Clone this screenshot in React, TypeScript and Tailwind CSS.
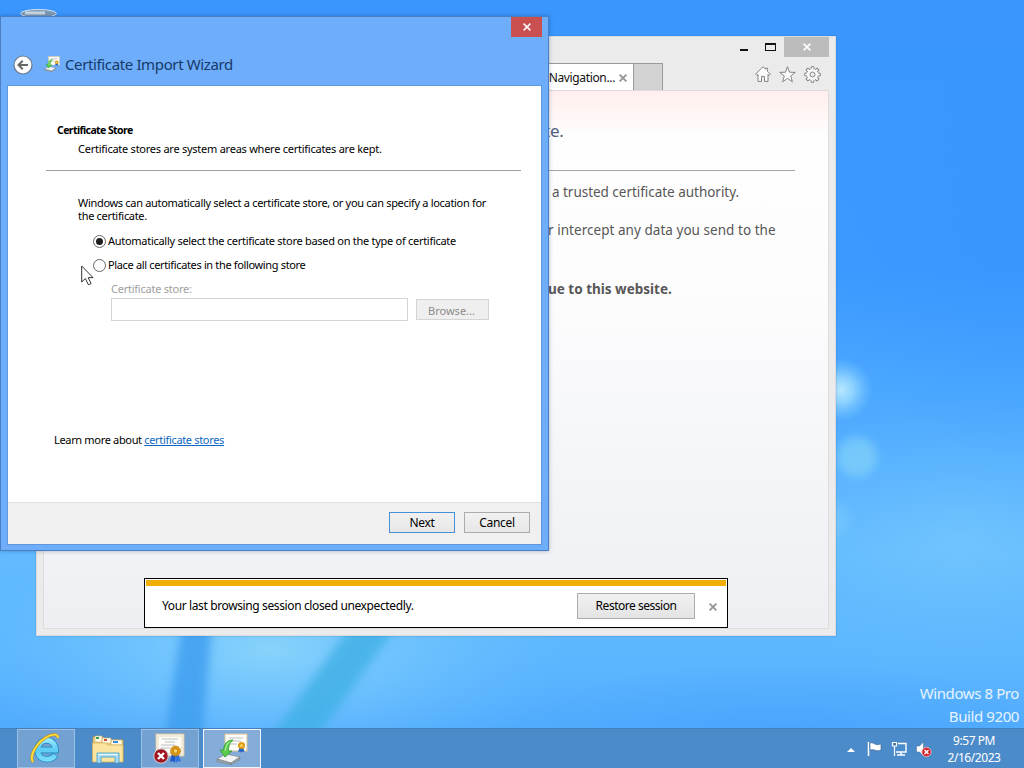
import React from "react";

function Wallpaper() {
  return (
    <svg className="absolute inset-0" width="1024" height="768" viewBox="0 0 1024 768">
      <defs>
        <linearGradient id="sky" x1="0" y1="0" x2="0" y2="1">
          <stop offset="0" stopColor="#3a96fd" />
          <stop offset="0.35" stopColor="#3b99ff" />
          <stop offset="0.55" stopColor="#50abff" />
          <stop offset="0.72" stopColor="#62bbff" />
          <stop offset="0.85" stopColor="#5db7ff" />
          <stop offset="1" stopColor="#4ca6fd" />
        </linearGradient>
        <radialGradient id="glow">
          <stop offset="0" stopColor="#8ad4fb" stopOpacity="0.95" />
          <stop offset="1" stopColor="#6cc2ff" stopOpacity="0" />
        </radialGradient>
        <radialGradient id="shade">
          <stop offset="0" stopColor="#338ffc" stopOpacity="0.7" />
          <stop offset="1" stopColor="#338ffc" stopOpacity="0" />
        </radialGradient>
        <radialGradient id="spark">
          <stop offset="0" stopColor="#bfeaff" stopOpacity="0.95" />
          <stop offset="0.4" stopColor="#a2dfff" stopOpacity="0.75" />
          <stop offset="1" stopColor="#7bcbff" stopOpacity="0" />
        </radialGradient>
        <filter id="slight" x="-50%" y="-50%" width="200%" height="200%">
          <feGaussianBlur stdDeviation="5" />
        </filter>
      </defs>
      <rect width="1024" height="768" fill="url(#sky)" />
      <ellipse cx="270" cy="650" rx="300" ry="130" fill="url(#glow)" />
      <ellipse cx="960" cy="540" rx="240" ry="140" fill="url(#glow)" opacity="0.4" />
      <ellipse cx="1024" cy="260" rx="200" ry="200" fill="url(#shade)" opacity="0.4" />
      <ellipse cx="780" cy="750" rx="280" ry="90" fill="url(#shade)" opacity="0.45" />
      <path d="M184 610 L213 610 L200 768 L160 768Z" fill="#3f9ff0" opacity="0.85" filter="url(#slight)" />
      <path d="M362 610 L408 610 L308 750 L262 750Z" fill="#3fb0e6" opacity="0.8" filter="url(#slight)" />
      <circle cx="841" cy="390" r="32" fill="url(#spark)" />
      <circle cx="857" cy="457" r="20" fill="#8ad8f8" opacity="0.6" filter="url(#slight)" />
      <circle cx="831" cy="520" r="18" fill="#83d2ff" opacity="0.4" filter="url(#slight)" />
      <ellipse cx="38.500" cy="13.500" rx="18" ry="4" fill="#7d9ab4" stroke="#cfe2f3" strokeWidth="1" />
      <path d="M25 13h20" stroke="#c9d7e4" strokeWidth="3" />
    </svg>
  );
}

function CloseGlyph({ size, color, width }: { size: number; color: string; width: number }) {
  return (
    <svg width={size} height={size} viewBox="0 0 8 8" fill="none" stroke={color} strokeWidth={width}>
      <path d="M0.600 0.600L7.400 7.400M7.400 0.600L0.600 7.400" />
    </svg>
  );
}

function HomeIcon() {
  return (
    <svg width="16" height="16" viewBox="0 0 16 16" fill="#fbfbfb" stroke="#858585" strokeWidth="1" strokeLinejoin="round">
      <path d="M8 0.700L0.600 8.200l1.200 1.200L3 8.300V15.400h3.500v-5h3v5H13V8.300l1.200 1.100 1.200-1.200-3-3V2.200h-2v1z" />
    </svg>
  );
}

function StarIcon() {
  return (
    <svg width="17" height="17" viewBox="0 0 17 17" fill="#fbfbfb" stroke="#858585" strokeWidth="1" strokeLinejoin="round">
      <path d="M8.500 0.700l2 5.500 5.800.200-4.600 3.600 1.700 5.800-4.900-3.400-4.900 3.400 1.700-5.800L.7 6.400l5.800-.200z" />
    </svg>
  );
}

function GearIcon() {
  const teeth = [0, 45, 90, 135, 180, 225, 270, 315];
  return (
    <svg width="17" height="17" viewBox="0 0 17 17" strokeLinejoin="round">
      {teeth.map((a) => (
        <path key={a} d="M6.900 3.300L7.200 0.700h2.600l.3 2.600" fill="#fbfbfb" stroke="#858585" transform={`rotate(${a} 8.500 8.500)`} />
      ))}
      <circle cx="8.500" cy="8.500" r="5.300" fill="#fbfbfb" />
      <circle cx="8.500" cy="8.500" r="2.500" fill="#ececec" stroke="#858585" />
    </svg>
  );
}

function BrowserWindow() {
  return (
    <section className="absolute left-[36px] top-[36px] flex h-[600px] w-[800px] flex-col border border-[#d9dbe0] bg-[#ebebeb] shadow-[0_0_2px_rgba(40,90,150,0.35)]">
      <div className="flex h-[26px] shrink-0 items-start justify-end pr-[6px]">
        <div className="mr-[17px] mt-[12px] h-[2px] w-[8px] bg-[#111]" />
        <div className="mr-[8px] mt-[6px] h-[8px] w-[11px] border border-t-2 border-[#111]" />
        <div className="flex h-[20px] w-[45px] items-center justify-center bg-[#bcbcbc]">
          <CloseGlyph size={8} color="#fff" width={1.5} />
        </div>
      </div>
      <div className="flex h-[27px] shrink-0">
        <div className="flex w-[597px] items-center justify-end border-r border-t border-[#9a9a9a] bg-white pr-[6px] pt-[1px]">
          <span className="mr-[4px] whitespace-nowrap font-['Noto_Sans'] text-[12px] leading-none tracking-[-0.350px] text-[#111]">Navigation...</span>
          <CloseGlyph size={8} color="#949494" width={1.8} />
        </div>
        <div className="w-[29px] border-r border-t border-[#9a9a9a] bg-[#d2d2d2]" />
        <div className="ml-[92px] flex items-start gap-[8px] pt-[3px]">
          <HomeIcon />
          <StarIcon />
          <GearIcon />
        </div>
      </div>
      <div className="mx-[6px] mb-[6px] flex flex-1 flex-col items-start overflow-hidden border border-[#dcdcdc] bg-[linear-gradient(to_bottom,#ffefee_0px,#fff5f4_20px,#fefefe_45px,#fdfdfe_190px,#f5f6f8_360px,#eeeff3_539px)] pl-[500px] font-['Noto_Sans'] text-[#575757]">
        <div className="flex h-[80px] w-[251px] items-end border-b border-[#a5a5a5] pb-[27px]">
          <span className="text-[17px] leading-[24px] tracking-[-0.200px] text-[#51617f]">te.</span>
        </div>
        <div className="mt-[11px] whitespace-nowrap pl-[8px] text-[13.500px] leading-[20px] tracking-[-0.030px]">a trusted certificate authority.</div>
        <div className="mt-[18px] whitespace-nowrap pl-[4px] text-[13.500px] leading-[20px] tracking-[0.040px]">r intercept any data you send to the</div>
        <div className="mt-[39px] whitespace-nowrap pl-[4px] text-[13.500px] font-bold leading-[20px]">ue to this website.</div>
        <div className="-ml-[400px] mt-[279px] flex h-[50px] w-[584px] shrink-0 flex-col border border-black bg-white p-[1px]">
          <div className="h-[6px] shrink-0 bg-[#f0ae06]" />
          <div className="flex h-[40px] items-center pl-[16px] pr-[9px] text-[12px] text-black">
            <span className="whitespace-nowrap tracking-[-0.380px]">Your last browsing session closed unexpectedly.</span>
            <button className="ml-auto mr-[14px] h-[26px] w-[118px] border border-[#acacac] bg-linear-to-b from-[#f1f1f1] to-[#e4e4e4] pb-px tracking-[-0.480px]">Restore session</button>
            <div className="pt-[2px]"><CloseGlyph size={8} color="#949494" width={1.800} /></div>
          </div>
        </div>
      </div>
    </section>
  );
}

function Certificate({ size }: { size: number }) {
  return (
    <svg width={size} height={size} viewBox="0 0 32 32">
      <rect x="2" y="1" width="28" height="22" fill="#fdfcf6" stroke="#cfc3a4" />
      <rect x="4" y="3" width="24" height="18" fill="none" stroke="#e8d9b8" />
      <path d="M8 6h16M11 9h10M7 12h14M7 15h9" stroke="#a9b1bc" strokeWidth="0.800" />
      <path d="M18 20l-2 9 3-1 2 2 1-9z" fill="#1d59c9" />
      <path d="M24 20l3 9-3-1-2 2-1-9z" fill="#2f74e0" />
      <circle cx="21.500" cy="18" r="5" fill="#dc9a16" stroke="#b97608" strokeDasharray="1.500 1" />
      <circle cx="21.500" cy="18" r="2.300" fill="#ffd362" stroke="#9c6308" strokeWidth="0.600" />
    </svg>
  );
}

function CertificateError() {
  return (
    <div className="relative h-[32px] w-[32px]">
      <Certificate size={32} />
      <svg className="absolute -left-[1px] top-[15px]" width="16" height="16" viewBox="0 0 16 16">
        <circle cx="8" cy="8" r="7.200" fill="#9f1620" stroke="#d9d0d4" />
        <path d="M5 5l6 6M11 5l-6 6" stroke="#fff" strokeWidth="2.400" />
      </svg>
    </div>
  );
}

function CertificateImport({ size }: { size: number }) {
  return (
    <svg width={size} height={size} viewBox="0 0 32 32">
      <rect x="9" y="1" width="22" height="17" fill="#fdfcf6" stroke="#d6c49a" />
      <path d="M13 5h14M15 8h10M12 11h9" stroke="#a9b1bc" strokeWidth="0.800" />
      <path d="M24 13l-2 6 2-.500 1 1 1.500-1 2 .500-1.500-6z" fill="#2563c8" />
      <circle cx="25.500" cy="12.500" r="3.500" fill="#dc9a16" />
      <circle cx="25.500" cy="12.500" r="1.500" fill="#ffd362" />
      <path d="M1 26l9-5 14 3-9 6z" fill="#f0f2f3" stroke="#7e878c" strokeWidth="0.700" />
      <path d="M1 26v2.500l14 3.300V30zM15 30v1.800l9-5.300V24z" fill="#9da6ab" stroke="#6f787d" strokeWidth="0.500" />
      <path d="M17 7c-6 0-9 4-9.500 10H4l5 7 7-6h-3.500c0-5 1-8 4.500-11z" fill="#5acb4c" stroke="#2f9a2e" strokeWidth="0.800" />
      <path d="M13.500 9c-3 2-4 5-4.300 9" stroke="#a5eb91" strokeWidth="1.300" fill="none" />
    </svg>
  );
}

function BackIcon() {
  return (
    <svg width="20" height="20" viewBox="0 0 20 20">
      <circle cx="10" cy="10" r="9" fill="#fefefe" stroke="#6c7b91" strokeWidth="1.200" />
      <path d="M15 10H6M9.700 5.800L5.500 10l4.200 4.200" fill="none" stroke="#686868" strokeWidth="2" />
    </svg>
  );
}

function Radio({ checked, label, tracking }: { checked: boolean; label: string; tracking: string }) {
  return (
    <label className="flex h-[14px] items-center whitespace-nowrap">
      <span className="mr-[2px] flex h-[13px] w-[13px] items-center justify-center rounded-full border border-[#686868] bg-white">
        {checked && <span className="h-[7px] w-[7px] rounded-full bg-[#1e1e1e]" />}
      </span>
      <span className={tracking}>{label}</span>
    </label>
  );
}

function WizardDialog() {
  return (
    <section className="absolute left-0 top-[16px] flex h-[535px] w-[549px] flex-col border border-[#4a7fc4] bg-[#6dadf9] font-['Noto_Sans'] text-[11px] text-black shadow-[0_0_4px_rgba(20,50,100,0.350)]">
      <div className="flex h-[20px] shrink-0 justify-end pr-[6px]">
        <div className="flex h-[20px] w-[31px] items-center justify-center bg-[#c94f50]">
          <CloseGlyph size={8} color="#fff" width={1.500} />
        </div>
      </div>
      <div className="flex h-[48px] shrink-0 items-center pl-[12px] pt-[7px]">
        <BackIcon />
        <div className="ml-[11px] mr-[5px] pb-[1px]">
          <CertificateImport size={16} />
        </div>
        <h1 className="whitespace-nowrap pb-[2px] text-[15px] leading-[20px] tracking-[-0.370px] text-[#173a69]">Certificate Import Wizard</h1>
      </div>
      <div className="ml-[6px] flex h-[460px] w-[535px] flex-col border border-[#5f97dc] bg-white">
        <div className="flex h-[416px] flex-col pl-[38px] pr-[20px] pt-[36px]">
          <div className="pl-[11px] text-[10.500px] font-bold leading-[16px] tracking-[-0.580px]">Certificate Store</div>
          <div className="mt-[3px] whitespace-nowrap pl-[32px] leading-[15px] tracking-[-0.250px]">Certificate stores are system areas where certificates are kept.</div>
          <div className="mt-[14px] h-px shrink-0 bg-[#a0a0a0]" />
          <div className="mt-[25px] whitespace-nowrap pl-[32px] leading-[13px] tracking-[-0.310px]">
            Windows can automatically select a certificate store, or you can specify a location for
            <br />
            the certificate.
          </div>
          <div className="mt-[12px] flex flex-col gap-[10px] pl-[47px]">
            <Radio checked label="Automatically select the certificate store based on the type of certificate" tracking="tracking-[-0.280px]" />
            <Radio checked={false} label="Place all certificates in the following store" tracking="tracking-[-0.350px]" />
          </div>
          <div className="mt-[10px] pl-[65px] leading-[14px] tracking-[-0.240px] text-[#a0a0a0]">Certificate store:</div>
          <div className="mt-[2px] flex items-center pl-[65px]">
            <div className="h-[23px] w-[297px] border border-[#d4d4d4] bg-white" />
            <button className="ml-[8px] h-[21px] w-[73px] border border-[#d4d4d4] bg-[#efefef] pr-[2px] pt-[1px] leading-none text-[#8b8b8b]">Browse...</button>
          </div>
          <div className="mt-[112px] whitespace-nowrap pl-[8px] leading-[14px] tracking-[-0.330px]">
            Learn more about <a className="text-[#0a66c2] underline">certificate stores</a>
          </div>
        </div>
        <div className="flex flex-1 items-start justify-end gap-[9px] border-t border-[#dfdfdf] bg-[#f0f0f0] pr-[11px] pt-[9px] text-[12px]">
          <button className="h-[21px] w-[66px] border border-[#4790d8] bg-linear-to-b from-[#f1f1f1] to-[#e7e7e7] leading-none tracking-[-0.300px]">Next</button>
          <button className="h-[21px] w-[66px] border border-[#acacac] bg-linear-to-b from-[#f1f1f1] to-[#e7e7e7] leading-none tracking-[-0.300px]">Cancel</button>
        </div>
      </div>
    </section>
  );
}

function ExplorerLogo() {
  return (
    <svg width="32" height="32" viewBox="0 0 32 32" fill="none">
      <defs>
        <linearGradient id="ie" gradientUnits="userSpaceOnUse" x1="0" y1="4" x2="0" y2="30">
          <stop offset="0" stopColor="#a5eeff" />
          <stop offset="0.5" stopColor="#5ccbf4" />
          <stop offset="1" stopColor="#7fe0fc" />
        </linearGradient>
      </defs>
      <path d="M8 17H25.500C25.500 11 21.500 7.300 16.500 7.300 11.500 7.300 7.700 11.500 7.700 17s3.800 9.200 9 9.200c4 0 7-1.500 8.600-4.700" stroke="#1683bd" strokeWidth="6.400" />
      <path d="M8 17H25.500C25.500 11 21.500 7.300 16.500 7.300 11.500 7.300 7.700 11.500 7.700 17s3.800 9.200 9 9.200c4 0 7-1.500 8.400-4.400" stroke="url(#ie)" strokeWidth="5" />
      <path d="M3 29C-1 23 6 11 15 5 21 1 28 0 28 5" stroke="#b8860b" strokeWidth="2.800" />
      <path d="M3 29C-1 23 6 11 15 5 21 1 28 0 28 5" stroke="#ffdc3c" strokeWidth="2" />
    </svg>
  );
}

function FolderIcon() {
  return (
    <svg width="34" height="32" viewBox="0 0 34 32">
      <path d="M2 4h10l2 3h18v21H2z" fill="#f2d67f" stroke="#c39c43" strokeWidth="0.700" />
      <path d="M4 3h7v6H4zM11 5h9v5h-9zM20 7h11v5H20z" fill="#fffbe8" stroke="#cdb067" strokeWidth="0.600" />
      <path d="M5 4h3v2H5z" fill="#2fa04c" />
      <path d="M13 6h3v2h-3z" fill="#d44b32" />
      <path d="M22 8h5v2h-5z" fill="#3b8ce0" />
      <path d="M1.500 10h13l2 2H32v17H1.500z" fill="#fae5a0" stroke="#d2ad53" strokeWidth="0.700" />
      <path d="M6 30V20h22v10h-4v-6H10v6z" fill="#a8dcf5" stroke="#4da0cc" strokeWidth="0.900" />
      <path d="M7 21.500h20" stroke="#e9faff" strokeWidth="1.200" />
    </svg>
  );
}

function TrayIcons() {
  return (
    <svg width="88" height="20" viewBox="0 0 88 20">
      <path d="M1 13h8L5 9z" fill="#fff" />
      <path d="M22.500 3v14" stroke="#fff" strokeWidth="1.500" />
      <path d="M24 4c3-1 4 1 6 1.500 2 .4 3 0 5-.5v6c-2 1-4 1-5.500.300C27.500 10.500 26 10.500 24 11z" fill="#fff" stroke="#355f91" strokeWidth="0.600" />
      <path d="M52 4.500h8v8.500H50" fill="none" stroke="#fff" strokeWidth="1.400" />
      <path d="M55 13v2.500M51 16h8" stroke="#fff" strokeWidth="1.500" />
      <path d="M46.500 3.500h4v3.500h-4zM48.500 7v10" fill="#46719c" stroke="#fff" strokeWidth="1.200" />
      <path d="M70.500 7h3l4-4v14l-4-4h-3z" fill="#fff" stroke="#42678f" strokeWidth="0.500" />
      <circle cx="80.500" cy="13" r="4.700" fill="#d5272d" stroke="#f4cdd0" strokeWidth="0.700" />
      <path d="M78.500 11l4 4M82.500 11l-4 4" stroke="#fff" strokeWidth="1.400" />
    </svg>
  );
}

function Taskbar() {
  return (
    <footer className="flex h-[40px] items-stretch border-t border-[#477fb8] bg-[#4c8bc9] pl-[17px] font-['Noto_Sans'] text-white">
      <div className="flex w-[58px] items-center justify-center border border-[#9dbfe4] bg-[#72a1d2]"><ExplorerLogo /></div>
      <div className="flex w-[66px] items-center justify-center"><FolderIcon /></div>
      <div className="flex w-[58px] items-center justify-center border border-[#9dbfe4] bg-[#72a1d2]"><CertificateError /></div>
      <div className="ml-[4px] flex w-[58px] items-center justify-center border border-[#eef5fc] bg-[#83acd9]"><CertificateImport size={32} /></div>
      <div className="-mr-[10px] ml-auto flex items-center"><TrayIcons /></div>
      <div className="flex w-[100px] flex-col items-center justify-center text-[12px] leading-[17px] tracking-[-0.450px]">
        <span>9:57 PM</span>
        <span>2/16/2023</span>
      </div>
    </footer>
  );
}

export default function App() {
  return (
    <main className="relative flex h-[768px] w-[1024px] flex-col justify-end overflow-hidden bg-[#3b99ff]">
      <Wallpaper />
      <BrowserWindow />
      <WizardDialog />
      <div className="relative pr-[5px] text-right font-['Noto_Sans'] text-[15px] leading-[23px] tracking-[-0.400px] text-[#e6f4ff]">
        <div>Windows 8 Pro</div>
        <div>Build 9200</div>
      </div>
      <div className="relative"><Taskbar /></div>
      <svg className="absolute left-[81px] top-[265px]" width="13" height="21" viewBox="0 0 13 21">
        <path d="M.7 1v16l3.700-3.500 3 6.300 2.700-1.200-2.900-6H12z" fill="#fff" stroke="#333" strokeWidth="1" />
      </svg>
    </main>
  );
}
